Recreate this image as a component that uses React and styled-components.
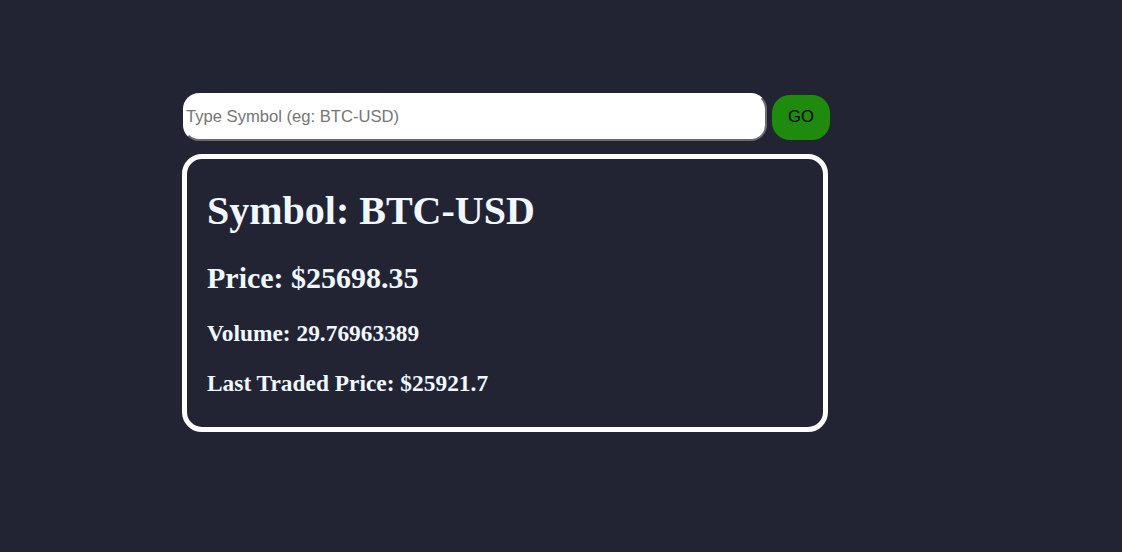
import React, { useState } from 'react'
import styled, { createGlobalStyle } from 'styled-components'

const GlobalStyle = createGlobalStyle`
  html, body {
    margin: 0;
    background: #222433;
  }
  body {
    font-family: "Liberation Serif", "Times New Roman", serif;
  }
`

const Page = styled.div`
  min-height: 552px;
  padding: 93px 0 0 182px;
  box-sizing: border-box;
`
const Form = styled.form`
  display: flex;
  align-items: center;
  gap: 5px;
  width: 648px;
  padding-left: 1px;
`
const Input = styled.input`
  width: 584px;
  height: 48px;
  box-sizing: border-box;
  padding: 0 1px;
  border: 2px solid;
  border-color: #fff #6b6b6b #6b6b6b #fff;
  border-radius: 16px;
  background: #fff;
  font-family: "Liberation Sans", Arial, sans-serif;
  font-size: 16.6px;
  color: #000;
  outline: none;
  &::placeholder {
    color: #757575;
  }
`
const Button = styled.button`
  width: 58px;
  height: 45px;
  border: none;
  border-radius: 18px;
  background: #1e8b0e;
  color: #000;
  font-family: "Liberation Sans", Arial, sans-serif;
  font-size: 16.6px;
  cursor: pointer;
`
const Card = styled.div`
  width: 646px;
  box-sizing: border-box;
  margin-top: 13px;
  padding: 0 20px 6px;
  border: 5px solid #fff;
  border-radius: 20px;
  color: #f0f8ff;
`
const Symbol = styled.h1`
  font-size: 40px;
  margin: 28px 0 27px;
`
const Price = styled.h2`
  font-size: 30px;
  margin: 25px 0;
`
const Stat = styled.h3`
  font-size: 23.4px;
  margin: 23.4px 0;
`

function App() {
  const [symbol, setSymbol] = useState('')
  return (
    <Page>
      <GlobalStyle />
      <Form onSubmit={(e) => e.preventDefault()}>
        <Input
          value={symbol}
          onChange={(e) => setSymbol(e.target.value)}
          placeholder='Type Symbol (eg: BTC-USD)'
        />
        <Button type='submit'>GO</Button>
      </Form>
      <Card>
        <Symbol>Symbol: BTC-USD</Symbol>
        <Price>Price: $25698.35</Price>
        <Stat>Volume: 29.76963389</Stat>
        <Stat>Last Traded Price: $25921.7</Stat>
      </Card>
    </Page>
  )
}

export default App
